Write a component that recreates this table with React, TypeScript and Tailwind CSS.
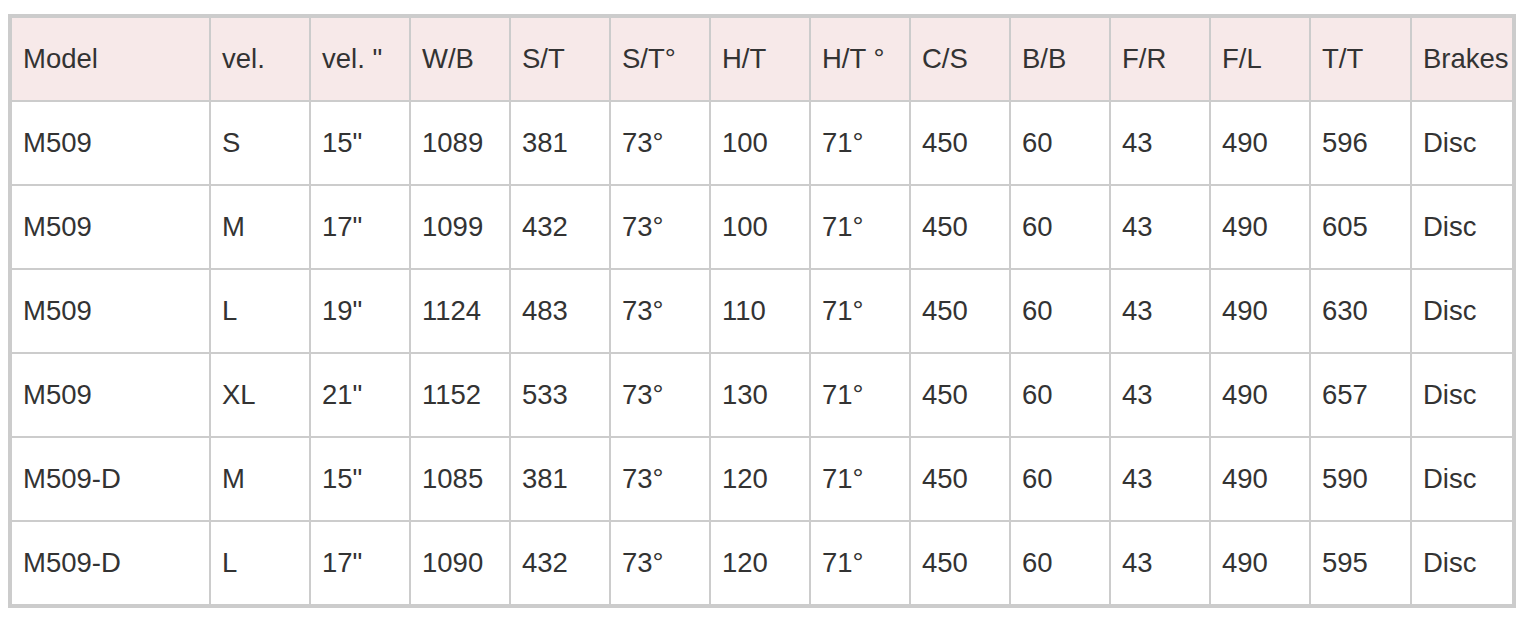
import React from "react";

const headers = ["Model", "vel.", 'vel. "', "W/B", "S/T", "S/T°", "H/T", "H/T °", "C/S", "B/B", "F/R", "F/L", "T/T", "Brakes"];

const rows: string[][] = [
  ["M509", "S", '15"', "1089", "381", "73°", "100", "71°", "450", "60", "43", "490", "596", "Disc"],
  ["M509", "M", '17"', "1099", "432", "73°", "100", "71°", "450", "60", "43", "490", "605", "Disc"],
  ["M509", "L", '19"', "1124", "483", "73°", "110", "71°", "450", "60", "43", "490", "630", "Disc"],
  ["M509", "XL", '21"', "1152", "533", "73°", "130", "71°", "450", "60", "43", "490", "657", "Disc"],
  ["M509-D", "M", '15"', "1085", "381", "73°", "120", "71°", "450", "60", "43", "490", "590", "Disc"],
  ["M509-D", "L", '17"', "1090", "432", "73°", "120", "71°", "450", "60", "43", "490", "595", "Disc"],
];

export default function App() {
  return (
    <div className="bg-white w-[1538px] h-[625px] pt-[14px] pl-[8px]" style={{ fontFamily: '"Liberation Sans", Arial, sans-serif' }}>
      <table className="table-fixed w-[1508px] border-separate border-spacing-0 border-[3px] border-[#cccccc] text-[27.5px] text-[#333333]">
        <colgroup>
          <col className="w-[199px]" />
          <col className="w-[100px]" />
          <col className="w-[100px]" />
          <col className="w-[100px]" />
          <col className="w-[100px]" />
          <col className="w-[100px]" />
          <col className="w-[100px]" />
          <col className="w-[100px]" />
          <col className="w-[100px]" />
          <col className="w-[100px]" />
          <col className="w-[100px]" />
          <col className="w-[100px]" />
          <col className="w-[101px]" />
          <col className="w-[102px]" />
        </colgroup>
        <thead>
          <tr>
            {headers.map((h, i) => (
              <th key={i} className="h-[84px] border border-[#cccccc] bg-[#f7e9e9] pl-[11px] pr-[2px] text-left font-normal whitespace-nowrap align-middle">
                {h}
              </th>
            ))}
          </tr>
        </thead>
        <tbody>
          {rows.map((r, ri) => (
            <tr key={ri}>
              {r.map((c, ci) => (
                <td key={ci} className="h-[84px] border border-[#cccccc] pl-[11px] pr-[2px] text-left whitespace-nowrap align-middle">
                  {c}
                </td>
              ))}
            </tr>
          ))}
        </tbody>
      </table>
    </div>
  );
}
